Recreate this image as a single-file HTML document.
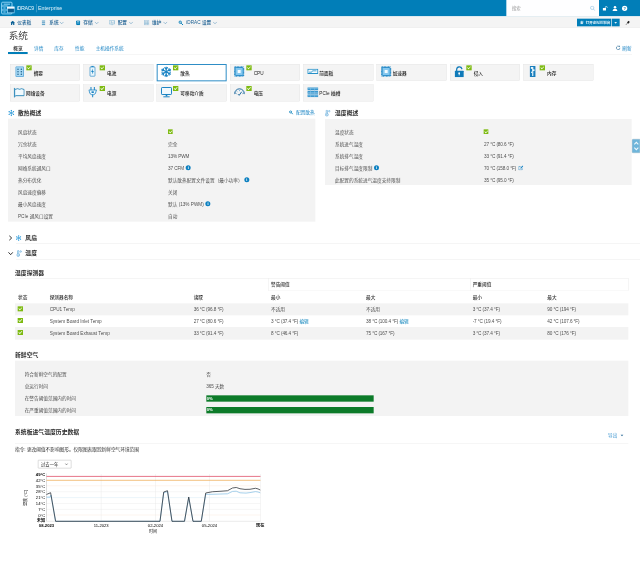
<!DOCTYPE html>
<html lang="zh-CN">
<head>
<meta charset="utf-8">
<title>iDRAC9 - 系统</title>
<style>
html,body{margin:0;padding:0;background:#fff;}
body{width:640px;height:568px;overflow:hidden;position:relative;}
#root{position:absolute;left:0;top:0;width:1920px;height:1704px;transform:scale(0.333333);transform-origin:0 0;
  font-family:"Liberation Sans","Noto Sans CJK SC",sans-serif;font-size:13px;color:#444;overflow:hidden;filter:grayscale(0);}
#root *{box-sizing:border-box;}
.abs{position:absolute;white-space:nowrap;}
a{color:#007db8;text-decoration:none;}
/* header */
#hdr{position:absolute;left:0;top:0;width:1920px;height:49px;background:rgba(0,125,184,.996);}
#nav{position:absolute;left:0;top:49px;width:1920px;height:34px;background:rgba(244,244,244,.996);border-bottom:1px solid #e2e2e2;}
.nv{position:absolute;top:3px;height:33px;line-height:33px;font-size:14px;font-weight:500;color:#1b5f92;white-space:nowrap;}
.t{position:absolute;white-space:nowrap;line-height:1;}
/* tiles */
.tile{position:absolute;width:210px;height:50px;background:rgba(244,244,244,.996);border:1px solid #dedede;}
.tile .lb{position:absolute;left:70px;top:19px;font-size:14px;line-height:14px;color:#222;font-weight:500;white-space:nowrap;}
.tile svg.ic{position:absolute;left:14px;top:7px;}
.ck{position:absolute;width:16px;height:15px;background:rgba(124,186,16,.996);}
.ck:after{content:"";position:absolute;left:3px;top:3px;width:8px;height:4px;border-left:2px solid #fff;border-bottom:2px solid #fff;transform:rotate(-45deg);}
.tile .ck{left:48px;top:3px;}
.tile.sel{background:rgba(255,255,255,.996);border:3px solid #2e8dc6;height:52px;}
.tile.sel > *{margin:-2px 0 0 -2px;}
.panel{position:absolute;background:rgba(243,243,243,.996);}
.row{position:absolute;font-size:14px;line-height:16px;color:#505050;white-space:nowrap;}
.h2{position:absolute;font-size:17.500px;font-weight:700;color:#2b2b2b;line-height:20px;white-space:nowrap;}
.info{display:inline-block;width:15px;height:15px;border-radius:50%;background:rgba(11,127,192,.996);color:#fff;font-size:11px;font-weight:bold;line-height:15px;text-align:center;vertical-align:middle;margin-left:5px;position:relative;top:-2px;letter-spacing:0;font-family:"Liberation Serif",serif;}
</style>
</head>
<body>
<div id="root">
<div id="hdr">
<svg class="abs" style="left:3px;top:4px" width="41" height="40" viewBox="0 0 41 40">
 <g fill="none" stroke="#93d8f8" stroke-width="3">
  <rect x="2" y="2.500" width="31" height="35.500" rx="3"/>
  <line x1="2" y1="14" x2="20" y2="14"/><line x1="2" y1="26" x2="20" y2="26"/>
  <line x1="8" y1="8.500" x2="27" y2="8.500"/><line x1="7" y1="20" x2="14" y2="20"/><line x1="7" y1="32" x2="14" y2="32"/>
 </g>
 <rect x="19" y="17" width="21" height="17.500" fill="#0a5d8f" stroke="#93d8f8" stroke-width="2.400"/>
 <rect x="18" y="16" width="23" height="6" fill="#eef9ff"/>
</svg>
<div class="t" style="left:50px;top:17px;font-size:16px;color:#e0f2fb;letter-spacing:-1px">iDRAC9</div>
<div class="abs" style="left:108px;top:12px;width:1px;height:25px;background:rgba(159,208,234,.996)"></div>
<div class="t" style="left:114px;top:17px;font-size:16px;color:#e0f2fb">Enterprise</div>
<div class="abs" style="left:1519px;top:0;width:278px;height:49px;background:rgba(255,255,255,.996)"></div>
<div class="t" style="left:1536px;top:18px;font-size:13px;color:#999">搜索</div>
<svg class="abs" style="left:1770px;top:17px" width="16" height="16" viewBox="0 0 16 16"><circle cx="6.5" cy="6.5" r="5" fill="none" stroke="#7fb9dd" stroke-width="1.6"/><line x1="10.2" y1="10.2" x2="15" y2="15" stroke="#7fb9dd" stroke-width="1.8"/></svg>
<svg class="abs" style="left:1808px;top:18px" width="16" height="14" viewBox="0 0 16 14"><rect x="0" y="6" width="10" height="8" fill="#fff"/><path d="M8 6V4a2.800 2.800 0 0 1 5.600 0V6" fill="none" stroke="#fff" stroke-width="1.800"/></svg>
<svg class="abs" style="left:1836px;top:16px" width="18" height="18" viewBox="0 0 18 18"><circle cx="9" cy="5.5" r="3.8" fill="#fff"/><path d="M2 17c0-5 3-7 7-7s7 2 7 7z" fill="#fff"/></svg>
<svg class="abs" style="left:1865px;top:16px" width="18" height="18" viewBox="0 0 18 18"><circle cx="9" cy="9" r="8" fill="#fff"/><text x="9" y="13.5" font-size="12" font-weight="bold" text-anchor="middle" fill="#007db8" font-family="Liberation Sans,sans-serif">?</text></svg>
</div>
<div id="nav">
<svg class="abs" style="left:31px;top:13px" width="14" height="13" viewBox="0 0 14 13"><path d="M7 0L0 6.5h2V13h3.6V8.5h2.8V13H12V6.5h2z" fill="#0e6296"/></svg>
<div class="nv" style="left:52px">仪表板</div>
<svg class="abs" style="left:125px;top:12px" width="11" height="15" viewBox="0 0 11 15"><g fill="#5b9fc6"><rect x="0" y="0" width="11" height="3.6"/><rect x="0" y="5.6" width="11" height="3.6"/><rect x="0" y="11.2" width="11" height="3.6"/></g></svg>
<div class="nv" style="left:148px">系统</div><svg class="abs" style="left:178px;top:15px" width="14" height="9" viewBox="0 0 15 9"><path d="M1.500 1.500L7.500 7.500L13.500 1.500" fill="none" stroke="#3f83b3" stroke-width="1.500"/></svg>
<svg class="abs" style="left:228px;top:12px" width="13" height="15" viewBox="0 0 13 15"><rect x="0.5" y="0.5" width="12" height="14" rx="2.5" fill="#007db8"/><rect x="3" y="3.2" width="7" height="1.8" fill="#cfe6f3"/><rect x="3" y="7" width="7" height="1.8" fill="#cfe6f3"/></svg>
<div class="nv" style="left:250px">存储</div><svg class="abs" style="left:283px;top:15px" width="14" height="9" viewBox="0 0 15 9"><path d="M1.500 1.500L7.500 7.500L13.500 1.500" fill="none" stroke="#3f83b3" stroke-width="1.500"/></svg>
<svg class="abs" style="left:328px;top:12px" width="17" height="15" viewBox="0 0 17 15"><g fill="none" stroke="#5b9fc6" stroke-width="1.5"><rect x="1" y="1" width="15" height="10"/><path d="M4 4h4M4 7h6M12 4v3"/><path d="M6 14h5"/></g></svg>
<div class="nv" style="left:353px">配置</div><svg class="abs" style="left:386px;top:15px" width="14" height="9" viewBox="0 0 15 9"><path d="M1.500 1.500L7.500 7.500L13.500 1.500" fill="none" stroke="#3f83b3" stroke-width="1.500"/></svg>
<svg class="abs" style="left:432px;top:12px" width="16" height="15" viewBox="0 0 16 15"><g fill="none" stroke="#7aaed0" stroke-width="1.4"><rect x="1" y="1" width="14" height="13"/><path d="M1 5.3h14M1 9.6h14M5.6 1v13M10.3 1v13"/></g></svg>
<div class="nv" style="left:456px">维护</div><svg class="abs" style="left:489px;top:15px" width="14" height="9" viewBox="0 0 15 9"><path d="M1.500 1.500L7.500 7.500L13.500 1.500" fill="none" stroke="#3f83b3" stroke-width="1.500"/></svg>
<svg class="abs" style="left:535px;top:12px" width="15" height="15" viewBox="0 0 15 15"><circle cx="5.5" cy="5.5" r="3.6" fill="none" stroke="#007db8" stroke-width="2.8"/><path d="M8.5 8.5L14 14" stroke="#007db8" stroke-width="3"/></svg>
<div class="nv" style="left:559px">iDRAC 设置</div><svg class="abs" style="left:638px;top:15px" width="14" height="9" viewBox="0 0 15 9"><path d="M1.500 1.500L7.500 7.500L13.500 1.500" fill="none" stroke="#3f83b3" stroke-width="1.500"/></svg>
<div class="abs" style="left:1731px;top:7px;width:102px;height:23px;background:rgba(0,125,184,.996)"></div>
<div class="abs" style="left:1835px;top:7px;width:24px;height:23px;background:rgba(0,125,184,.996)"></div>
<svg class="abs" style="left:1741px;top:13px" width="10" height="11" viewBox="0 0 12 13"><rect x="0" y="2" width="9" height="11" fill="#cde6f4"/><rect x="3" y="0" width="9" height="10" fill="none" stroke="#cde6f4" stroke-width="1.2"/></svg>
<div class="t" style="left:1757px;top:13px;font-size:10.500px;font-weight:bold;color:#e6f3fa">打开虚拟控制台</div>
<div class="abs" style="left:1843px;top:17px;width:0;height:0;border-left:4px solid transparent;border-right:4px solid transparent;border-top:5px solid #e6f3fa"></div>
<svg class="abs" style="left:1876px;top:12px" width="15" height="15" viewBox="0 0 15 15"><path d="M1 14L7 8" stroke="#222" stroke-width="1.600"/><path d="M4.500 5.500l5 5l1.200-2.400l2.800-2.800l-3.800-3.800l-2.800 2.800z" fill="#222"/></svg>
</div>
<div class="t" style="left:26px;top:93px;font-size:29px;color:#444">系统</div>
<div class="abs" style="left:24px;top:162px;width:1872px;height:1px;background:rgba(228,228,228,.996)"></div>
<div class="abs" style="left:24px;top:156px;width:59px;height:6px;background:rgba(0,125,184,.996)"></div>
<div class="t" style="left:40px;top:138px;font-size:14px;color:#222;font-weight:500">概览</div>
<div class="t" style="left:102px;top:138px;font-size:14px;color:#1a84c4">详情</div>
<div class="t" style="left:163px;top:138px;font-size:14px;color:#1a84c4">库存</div>
<div class="t" style="left:225px;top:138px;font-size:14px;color:#1a84c4">性能</div>
<div class="t" style="left:287px;top:138px;font-size:14px;color:#1a84c4">主机操作系统</div>
<svg class="abs" style="left:1847px;top:136px" width="15" height="15" viewBox="0 0 14 14"><path d="M12 7a5 5 0 1 1-1.600-3.700" fill="none" stroke="#2a6a96" stroke-width="1.700"/><path d="M7.800 3.800h4V-.2z" fill="#2a6a96"/></svg>
<div class="t" style="left:1867px;top:137px;font-size:14px;color:#1a84c4">刷新</div>

<div class="tile" style="left:30px;top:192px"><svg class="abs" style="left:15px;top:6px" width="26" height="32" viewBox="0 0 26 32"><rect x="1.200" y="1.200" width="23.600" height="29.600" rx="1.500" fill="#a9d9f4" stroke="#3d97d3" stroke-width="2.200"/><circle cx="8" cy="8.5" r="2.300" fill="#1d608c"/><circle cx="18" cy="8.5" r="2.300" fill="#1d608c"/><circle cx="8" cy="16" r="2.300" fill="#1d608c"/><circle cx="18" cy="16" r="2.300" fill="#1d608c"/><circle cx="8" cy="23.5" r="2.300" fill="#1d608c"/><circle cx="18" cy="23.5" r="2.300" fill="#1d608c"/></svg><div class="ck"></div><div class="lb" style="left:70px">摘要</div></div>
<div class="tile" style="left:250px;top:192px"><svg class="abs" style="left:17px;top:4px" width="19" height="33" viewBox="0 0 19 35"><rect x="6" y="0" width="7" height="4" fill="#1a84c4"/><rect x="1.2" y="4" width="16.600" height="29.800" rx="2.500" fill="#eaf5fb" stroke="#1a84c4" stroke-width="2.400"/><path d="M11 9L5 20h4l-1.500 8L14 17h-4z" fill="#1a84c4"/></svg><div class="ck"></div><div class="lb" style="left:70px">电池</div></div>
<div class="tile sel" style="left:470px;top:192px"><svg class="abs" style="left:11px;top:6px" width="33" height="33" viewBox="0 0 30 30"><g stroke="#1a84c4" stroke-width="3.2" stroke-linecap="round"><line x1="15" y1="15" x2="15.0" y2="28.2"/><line x1="15.0" y1="23.2" x2="18.6" y2="26.2"/><line x1="15.0" y1="23.2" x2="11.4" y2="26.2"/><line x1="15" y1="15" x2="3.6" y2="21.6"/><line x1="7.9" y1="19.1" x2="7.1" y2="23.8"/><line x1="7.9" y1="19.1" x2="3.4" y2="17.5"/><line x1="15" y1="15" x2="3.6" y2="8.4"/><line x1="7.9" y1="10.9" x2="3.4" y2="12.5"/><line x1="7.9" y1="10.9" x2="7.1" y2="6.2"/><line x1="15" y1="15" x2="15.0" y2="1.8"/><line x1="15.0" y1="6.8" x2="11.4" y2="3.8"/><line x1="15.0" y1="6.8" x2="18.6" y2="3.8"/><line x1="15" y1="15" x2="26.4" y2="8.4"/><line x1="22.1" y1="10.9" x2="22.9" y2="6.2"/><line x1="22.1" y1="10.9" x2="26.6" y2="12.5"/><line x1="15" y1="15" x2="26.4" y2="21.6"/><line x1="22.1" y1="19.1" x2="26.6" y2="17.5"/><line x1="22.1" y1="19.1" x2="22.9" y2="23.8"/></g></svg><div class="ck"></div><div class="lb" style="left:70px">散热</div></div>
<div class="tile" style="left:690px;top:192px"><svg class="abs" style="left:10px;top:5px" width="33" height="33" viewBox="0 0 33 33"><rect x="3.500" y="3.500" width="26" height="26" rx="2" fill="none" stroke="#1a84c4" stroke-width="5" stroke-dasharray="2.400 1.800"/><rect x="4.500" y="4.500" width="24" height="24" rx="3" fill="#86c8ef" stroke="#1a84c4" stroke-width="2.400"/><rect x="12" y="12" width="9" height="9" fill="#f4fbff"/></svg><div class="ck"></div><div class="lb" style="left:70px;top:20px">CPU</div></div>
<div class="tile" style="left:910px;top:192px"><svg class="abs" style="left:11px;top:13px" width="33" height="16" viewBox="0 0 33 16"><rect x="1.500" y="1.500" width="30" height="13" fill="#f6fbfe" stroke="#2590c8" stroke-width="3"/><path d="M5 10.500h8l2.500-4h12" fill="none" stroke="#2590c8" stroke-width="2.400"/></svg><div class="lb" style="left:47px">前面板</div></div>
<div class="tile" style="left:1130px;top:192px"><svg class="abs" style="left:11px;top:5px" width="33" height="33" viewBox="0 0 33 33"><rect x="3.500" y="3.500" width="26" height="26" rx="2" fill="none" stroke="#1a84c4" stroke-width="5" stroke-dasharray="2.400 1.800"/><rect x="4.500" y="4.500" width="24" height="24" rx="3" fill="#86c8ef" stroke="#1a84c4" stroke-width="2.400"/><rect x="12" y="12" width="9" height="9" fill="#f4fbff"/></svg><div class="lb" style="left:47px">加速器</div></div>
<div class="tile" style="left:1350px;top:192px"><svg class="abs" style="left:13px;top:5px" width="29" height="34" viewBox="0 0 29 34"><path d="M6 15V10.500a8 8 0 0 1 15.700-2.200" fill="none" stroke="#0f7ab9" stroke-width="3.600" stroke-linecap="round"/><rect x="0" y="14" width="27" height="19.500" rx="1.500" fill="#0f7ab9"/><circle cx="13.500" cy="21.500" r="2.600" fill="#fff"/><rect x="12.200" y="21.500" width="2.600" height="6.500" fill="#fff"/></svg><div class="ck"></div><div class="lb" style="left:70px">侵入</div></div>
<div class="tile" style="left:1570px;top:192px"><svg class="abs" style="left:18px;top:5px" width="18" height="33" viewBox="0 0 18 33"><rect x="0" y="0" width="18" height="33" rx="1" fill="#1a7fbd"/><rect x="7.500" y="3" width="3.400" height="27" fill="#eef8fd"/><rect x="3.500" y="3" width="6" height="5.500" fill="#eef8fd"/><rect x="9" y="10" width="5.500" height="5" fill="#eef8fd"/><rect x="4" y="17" width="5" height="4" fill="#cfe9f7"/></svg><div class="ck"></div><div class="lb" style="left:70px">内存</div></div>
<div class="tile" style="left:30px;top:254px"><svg class="abs" style="left:10px;top:8px" width="33" height="30" viewBox="0 0 33 30"><path d="M2 0.500v29" stroke="#2a86b8" stroke-width="3.200" fill="none"/><path d="M3 5.500c4 0 5.500-2.500 9-2.500c3 0 3 2 6 2s3-2 6-2c2.500 0 4 2.500 7.500 2.500V24H6.500l-3.500 3z" fill="#f2fafe" stroke="#2a86b8" stroke-width="2.800" stroke-linejoin="round"/></svg><div class="lb" style="left:47px">网络设备</div></div>
<div class="tile" style="left:250px;top:254px"><svg class="abs" style="left:14px;top:6px" width="26" height="32" viewBox="0 0 26 32"><path d="M8 1v8M18 1v8" stroke="#1a84c4" stroke-width="3" stroke-linecap="round"/><path d="M1.500 9h23l-3.500 11l-5 3h-6l-5-3z" fill="#eef7fc" stroke="#1a84c4" stroke-width="2.400" stroke-linejoin="round"/><rect x="9.500" y="13" width="7" height="5" fill="#1a84c4"/><path d="M13 23v8" stroke="#1a84c4" stroke-width="3"/></svg><div class="ck"></div><div class="lb" style="left:70px">电源</div></div>
<div class="tile" style="left:470px;top:254px"><svg class="abs" style="left:12px;top:6px" width="33" height="32" viewBox="0 0 33 32"><rect x="1.500" y="1.500" width="30" height="21" rx="2" fill="#f2f9fd" stroke="#1a84c4" stroke-width="3"/><rect x="14" y="23" width="5" height="5" fill="#1a84c4"/><rect x="7" y="28" width="19" height="3.200" fill="#1a84c4"/></svg><div class="ck"></div><div class="lb" style="left:70px">可移动介质</div></div>
<div class="tile" style="left:690px;top:254px"><svg class="abs" style="left:11px;top:7px" width="33" height="27" viewBox="0 0 33 27"><path d="M2 19A14.500 14.500 0 0 1 31 19" fill="none" stroke="#1f6aa0" stroke-width="3"/><path d="M2 19c1.500-1.800 4-1.800 5.500 0M25.500 19c1.500-1.800 4-1.800 5.500 0" fill="none" stroke="#1f6aa0" stroke-width="2.400"/><path d="M8.500 12l2 2.500M16.500 8v3.500M24.500 12l-2 2.500" stroke="#3d97d3" stroke-width="2"/><path d="M12 20.500l3.500 3.500L22.500 14" fill="none" stroke="#1f6aa0" stroke-width="3"/></svg><div class="ck"></div><div class="lb" style="left:70px">电压</div></div>
<div class="tile" style="left:910px;top:254px"><svg class="abs" style="left:11px;top:7px" width="33" height="30" viewBox="0 0 32 29" preserveAspectRatio="none"><rect x="0" y="0" width="32" height="8.300" fill="#3a97cf"/><rect x="0" y="3.2" width="32" height="1.600" fill="#8cc6e8"/><rect x="0" y="10.3" width="32" height="8.300" fill="#3a97cf"/><rect x="0" y="13.5" width="32" height="1.600" fill="#8cc6e8"/><rect x="0" y="20.6" width="32" height="8.300" fill="#3a97cf"/><rect x="0" y="23.8" width="32" height="1.600" fill="#8cc6e8"/><rect x="9" y="0" width="1.500" height="29" fill="#8cc6e8"/><rect x="21" y="0" width="1.500" height="29" fill="#8cc6e8"/></svg><div class="lb" style="left:47px">PCIe 插槽</div></div>

<svg class="abs" style="left:24px;top:329px" width="20" height="20" viewBox="0 0 20 20"><g stroke="#2396d8" stroke-width="2"><line x1="10.0" y1="2.4" x2="10.0" y2="17.6"/><line x1="16.6" y1="6.2" x2="3.4" y2="13.8"/><line x1="16.6" y1="13.8" x2="3.4" y2="6.2"/></g><g fill="#2396d8"><circle cx="10.0" cy="17.6" r="1.900"/><circle cx="3.4" cy="13.8" r="1.900"/><circle cx="3.4" cy="6.2" r="1.900"/><circle cx="10.0" cy="2.4" r="1.900"/><circle cx="16.6" cy="6.2" r="1.900"/><circle cx="16.6" cy="13.8" r="1.900"/></g></svg><div class="h2" style="left:54px;top:330px">散热概述</div><svg class="abs" style="left:867px;top:331px" width="13" height="13" viewBox="0 0 15 15"><circle cx="5.500" cy="5.500" r="3.600" fill="none" stroke="#007db8" stroke-width="2.800"/><path d="M8.500 8.500L14 14" stroke="#007db8" stroke-width="3"/></svg><div class="t" style="left:888px;top:331px;font-size:14px;color:#1a84c4">配置散热</div><svg class="abs" style="left:975px;top:329px" width="17" height="21" viewBox="0 0 17 21"><circle cx="5.500" cy="15" r="4.300" fill="none" stroke="#2f8fcf" stroke-width="1.600"/><path d="M3.700 11.500V3a1.800 1.800 0 0 1 3.600 0v8.500" fill="#fff" stroke="#2f8fcf" stroke-width="1.500"/><circle cx="5.500" cy="15" r="1.600" fill="#2f8fcf"/><circle cx="13" cy="4.500" r="2.300" fill="none" stroke="#2f8fcf" stroke-width="1.400"/></svg><div class="h2" style="left:1005px;top:330px">温度概述</div><div class="panel" style="left:24px;top:356px;width:922px;height:309px"></div><div class="panel" style="left:975px;top:357px;width:920px;height:198px"></div><div class="row" style="left:54px;top:387.5px">风扇状态</div><div class="ck" style="left:504px;top:388px;width:14px;height:14px"></div><div class="row" style="left:54px;top:423.6px">冗余状态</div><div class="row" style="left:504px;top:423.6px">完全</div><div class="row" style="left:54px;top:459.7px">平均风扇速度</div><div class="row" style="left:504px;top:459.7px;letter-spacing:-0.3px;">13% PWM</div><div class="row" style="left:54px;top:495.8px">网络系统通风口</div><div class="row" style="left:504px;top:495.8px;letter-spacing:-0.3px;">37 CFM<span class="info">i</span></div><div class="row" style="left:54px;top:531.9px">热分布优化</div><div class="row" style="left:504px;top:531.9px">默认散热配置文件设置（最小功率）<span class="info">i</span></div><div class="row" style="left:54px;top:568.0px">风扇速度偏移</div><div class="row" style="left:504px;top:568.0px">关闭</div><div class="row" style="left:54px;top:604.1px">最小风扇速度</div><div class="row" style="left:504px;top:604.1px">默认 (13% PWM)<span class="info">i</span></div><div class="row" style="left:54px;top:640.2px">PCIe 通风口设置</div><div class="row" style="left:504px;top:640.2px">自动</div><div class="row" style="left:1005px;top:387.5px">温度状态</div><div class="ck" style="left:1451px;top:388px;width:14px;height:14px"></div><div class="row" style="left:1005px;top:423.6px">系统进气温度</div><div class="row" style="left:1452px;top:423.6px;letter-spacing:-0.3px;">27 °C (80.6 °F)</div><div class="row" style="left:1005px;top:459.7px">系统排气温度</div><div class="row" style="left:1452px;top:459.7px;letter-spacing:-0.3px;">33 °C (91.4 °F)</div><div class="row" style="left:1005px;top:495.8px">目标排气温度限制<span class="info">i</span></div><div class="row" style="left:1452px;top:495.8px;letter-spacing:-0.3px;">70 °C (158.0 °F)<svg style="vertical-align:middle;margin-left:6px;position:relative;top:-2px" width="15" height="15" viewBox="0 0 13 13"><path d="M10 7.500V12H1V3h5" fill="none" stroke="#1a84c4" stroke-width="1.400"/><path d="M5 8.500L5.500 6l5.500-5.500l2 2L7.500 8z" fill="#1a84c4"/></svg></div><div class="row" style="left:1005px;top:531.9px">此配置的系统进气温度支持限制</div><div class="row" style="left:1452px;top:531.9px;letter-spacing:-0.3px;">35 °C (95.0 °F)</div><div class="abs" style="left:1896px;top:417px;width:24px;height:42px;background:rgba(109,181,218,.996);border:1px solid #8fa9b8;border-radius:3px 0 0 3px"></div><svg class="abs" style="left:1901px;top:423px" width="16" height="30" viewBox="0 0 16 30"><path d="M2 10L8 4l6 6M2 20l6 6l6-6" fill="none" stroke="#eef8fd" stroke-width="3.200"/></svg>
<svg class="abs" style="left:26px;top:705px" width="12" height="18" viewBox="0 0 12 18"><path d="M2 2.500l7 6.500l-7 6.500" fill="none" stroke="#222" stroke-width="2.800"/></svg><svg class="abs" style="left:47px;top:705px" width="18" height="18" viewBox="0 0 20 20"><g stroke="#2396d8" stroke-width="2"><line x1="10.0" y1="2.4" x2="10.0" y2="17.6"/><line x1="16.6" y1="6.2" x2="3.4" y2="13.8"/><line x1="16.6" y1="13.8" x2="3.4" y2="6.2"/></g><g fill="#2396d8"><circle cx="10.0" cy="17.6" r="1.900"/><circle cx="3.4" cy="13.8" r="1.900"/><circle cx="3.4" cy="6.2" r="1.900"/><circle cx="10.0" cy="2.4" r="1.900"/><circle cx="16.6" cy="6.2" r="1.900"/><circle cx="16.6" cy="13.8" r="1.900"/></g></svg><div class="h2" style="left:76px;top:704px">风扇</div><div class="abs" style="left:48px;top:730px;width:1872px;height:1px;background:rgba(227,227,227,.996)"></div><svg class="abs" style="left:23px;top:755px" width="18" height="12" viewBox="0 0 18 12"><path d="M2.500 2l6.500 7l6.500-7" fill="none" stroke="#222" stroke-width="2.800"/></svg><svg class="abs" style="left:49px;top:750px" width="17" height="21" viewBox="0 0 17 21"><circle cx="5.500" cy="15" r="4.300" fill="none" stroke="#2f8fcf" stroke-width="1.600"/><path d="M3.700 11.500V3a1.800 1.800 0 0 1 3.600 0v8.500" fill="#fff" stroke="#2f8fcf" stroke-width="1.500"/><circle cx="5.500" cy="15" r="1.600" fill="#2f8fcf"/><circle cx="13" cy="4.500" r="2.300" fill="none" stroke="#2f8fcf" stroke-width="1.400"/></svg><div class="h2" style="left:76px;top:750px">温度</div><div class="abs" style="left:48px;top:778px;width:1872px;height:1px;background:rgba(227,227,227,.996)"></div>
<div class="h2" style="left:45px;top:808px;font-size:17.500px">温度探测器</div><div class="abs" style="left:45px;top:835px;width:1840px;height:1px;background:rgba(227,227,227,.996)"></div><div class="abs" style="left:804px;top:835px;width:606px;height:37px;border-left:1px solid #e0e0e0;border-bottom:1px solid #ececec"></div><div class="abs" style="left:1410px;top:835px;width:475px;height:37px;border-left:1px solid #e0e0e0;border-right:1px solid #e0e0e0;border-bottom:1px solid #ececec"></div><div class="abs" style="left:45px;top:910px;width:1840px;height:36px;background:rgba(243,243,243,.996)"></div><div class="abs" style="left:45px;top:981px;width:1840px;height:36px;background:rgba(243,243,243,.996)"></div><div class="abs" style="left:45px;top:1017px;width:1840px;height:1px;background:rgba(232,232,232,.996)"></div><div class="row" style="left:813px;top:845px;color:#333;font-weight:500;font-size:14px">警告阈值</div><div class="row" style="left:1418px;top:845px;color:#333;font-weight:500;font-size:14px">严重阈值</div><div class="row" style="left:54px;top:883px;color:#333;font-weight:500;font-size:14px">状态</div><div class="row" style="left:149px;top:883px;color:#333;font-weight:500;font-size:14px">探测器名称</div><div class="row" style="left:581px;top:883px;color:#333;font-weight:500;font-size:14px">读取</div><div class="row" style="left:813px;top:883px;color:#333;font-weight:500;font-size:14px">最小</div><div class="row" style="left:1098px;top:883px;color:#333;font-weight:500;font-size:14px">最大</div><div class="row" style="left:1418px;top:883px;color:#333;font-weight:500;font-size:14px">最小</div><div class="row" style="left:1642px;top:883px;color:#333;font-weight:500;font-size:14px">最大</div><div class="ck" style="left:53px;top:919px;width:16px;height:15px"></div><div class="row" style="left:149px;top:920px;">CPU1 Temp</div><div class="row" style="left:581px;top:920px;letter-spacing:-0.3px;">36 °C (96.8 °F)</div><div class="row" style="left:813px;top:920px;">不适用</div><div class="row" style="left:1098px;top:920px;">不适用</div><div class="row" style="left:1418px;top:920px;letter-spacing:-0.3px;">3 °C (37.4 °F)</div><div class="row" style="left:1642px;top:920px;letter-spacing:-0.3px;">90 °C (194 °F)</div><div class="ck" style="left:53px;top:954px;width:16px;height:15px"></div><div class="row" style="left:149px;top:955px;">System Board Inlet Temp</div><div class="row" style="left:581px;top:955px;letter-spacing:-0.3px;">27 °C (80.6 °F)</div><div class="row" style="left:813px;top:955px;letter-spacing:-0.3px;">3 °C (37.4 °F) <a>编辑</a></div><div class="row" style="left:1098px;top:955px;letter-spacing:-0.3px;">38 °C (100.4 °F) <a>编辑</a></div><div class="row" style="left:1418px;top:955px;letter-spacing:-0.3px;">-7 °C (19.4 °F)</div><div class="row" style="left:1642px;top:955px;letter-spacing:-0.3px;">42 °C (107.6 °F)</div><div class="ck" style="left:53px;top:990px;width:16px;height:15px"></div><div class="row" style="left:149px;top:991px;">System Board Exhaust Temp</div><div class="row" style="left:581px;top:991px;letter-spacing:-0.3px;">33 °C (91.4 °F)</div><div class="row" style="left:813px;top:991px;letter-spacing:-0.3px;">8 °C (46.4 °F)</div><div class="row" style="left:1098px;top:991px;letter-spacing:-0.3px;">75 °C (167 °F)</div><div class="row" style="left:1418px;top:991px;letter-spacing:-0.3px;">3 °C (37.4 °F)</div><div class="row" style="left:1642px;top:991px;letter-spacing:-0.3px;">80 °C (176 °F)</div>
<div class="h2" style="left:45px;top:1054px;font-size:17.500px">新鲜空气</div><div class="panel" style="left:45px;top:1082px;width:1840px;height:166px"></div><div class="row" style="left:74px;top:1115px">符合新鲜空气的配置</div><div class="row" style="left:619px;top:1115px">否</div><div class="row" style="left:74px;top:1150px">总运行时间</div><div class="row" style="left:619px;top:1150px;letter-spacing:-0.3px;">365 天数</div><div class="row" style="left:74px;top:1186px">在警告阈值范围内的时间</div><div class="row" style="left:74px;top:1223px">在严重阈值范围内的时间</div><div class="abs" style="left:619px;top:1186px;width:502px;height:19px;background:rgba(11,122,40,.996);color:#fff;font-size:12.500px;font-weight:bold;line-height:19px;padding-left:1px">0%</div><div class="abs" style="left:619px;top:1221px;width:502px;height:19px;background:rgba(11,122,40,.996);color:#fff;font-size:12.500px;font-weight:bold;line-height:19px;padding-left:1px">0%</div>
<div class="h2" style="left:45px;top:1287px;font-size:17.500px">系统板进气温度历史数据</div><div class="t" style="left:1824px;top:1299px;font-size:14px;color:#3a94cf">导出</div><div class="abs" style="left:1862px;top:1304px;width:0;height:0;border-left:4px solid transparent;border-right:4px solid transparent;border-top:5px solid #2a6a96"></div><div class="abs" style="left:45px;top:1331px;width:1840px;height:1px;background:rgba(227,227,227,.996)"></div><div class="row" style="left:45px;top:1340px;color:#333;font-size:14px">指令: 更改阈值不影响图形。仅限图表跟踪新鲜空气环境范围</div><div class="abs" style="left:114px;top:1380px;width:100px;height:25px;border:1px solid #999;border-radius:2px;background:rgba(255,255,255,.996);font-size:13px;line-height:23px;padding-left:8px;color:#222">过去一年</div><svg class="abs" style="left:194px;top:1389px" width="11" height="8" viewBox="0 0 11 8"><path d="M1.500 1.500l4 4l4-4" fill="none" stroke="#333" stroke-width="1.600"/></svg><svg class="abs" style="left:60px;top:1410px" width="760" height="200" viewBox="0 0 760 200" font-family="Liberation Sans, Noto Sans CJK SC, sans-serif"><line x1="79.5" y1="47.4" x2="721.5" y2="47.4" stroke="#fbe9dc" stroke-width="1.500"/><line x1="79.5" y1="65.1" x2="721.5" y2="65.1" stroke="#ececec" stroke-width="1.500"/><line x1="79.5" y1="82.8" x2="721.5" y2="82.8" stroke="#d8ebf7" stroke-width="1.500"/><line x1="79.5" y1="100.5" x2="721.5" y2="100.5" stroke="#ececec" stroke-width="1.500"/><line x1="79.5" y1="118.2" x2="721.5" y2="118.2" stroke="#ececec" stroke-width="1.500"/><line x1="79.5" y1="135.0" x2="721.5" y2="135.0" stroke="#fbe9dc" stroke-width="1.500"/><line x1="243.6" y1="12" x2="243.6" y2="153.9" stroke="#e6e6e6" stroke-width="1.200"/><line x1="406.5" y1="12" x2="406.5" y2="153.9" stroke="#e6e6e6" stroke-width="1.200"/><line x1="568.5" y1="12" x2="568.5" y2="153.9" stroke="#e6e6e6" stroke-width="1.200"/><line x1="721.5" y1="12" x2="721.5" y2="153.9" stroke="#e6e6e6" stroke-width="1.200"/><line x1="79.5" y1="10.5" x2="79.5" y2="153.9" stroke="#bbb" stroke-width="1.500"/><line x1="79.5" y1="153.9" x2="721.5" y2="153.9" stroke="#ccc" stroke-width="1.200"/><line x1="79.5" y1="19.2" x2="721.5" y2="19.2" stroke="#e0526a" stroke-width="2.400"/><line x1="79.5" y1="30.9" x2="721.5" y2="30.9" stroke="#f0b060" stroke-width="2.400"/><polyline points="79.5,81.3 90.6,81.3 93.0,75.0 106.8,153.9 420.0,153.9 431.2,68.4 442.5,64.8 456.0,153.9 493.5,153.9 506.2,82.8 519.0,153.9 543.8,153.9 557.2,72.9 576.0,72.9 622.5,71.4 637.5,64.2 648.8,63.6 660.0,68.4 678.0,69.3 690.0,67.8 706.5,64.8 714.0,66.0 720.9,68.4" fill="none" stroke="#78b9e3" stroke-width="2" stroke-linejoin="round"/><polyline points="79.5,73.5 91.8,68.1 106.8,153.9 420.0,153.9 431.2,66.0 442.5,62.2 456.0,153.9 493.5,153.9 506.2,81.0 519.0,153.9 543.8,153.9 557.2,69.0 577.5,65.2 600.0,63.9 622.5,62.2 637.5,54.0 648.8,52.5 660.0,56.2 675.0,58.2 690.0,57.8 706.5,54.8 714.0,56.7 720.9,60.0" fill="none" stroke="#2a2f36" stroke-width="2.300" stroke-linejoin="round"/><text x="75.5" y="18.6" font-size="12.500" text-anchor="end" fill="#000" font-weight="bold">49°C</text><text x="75.5" y="35.4" font-size="12.500" text-anchor="end" fill="#000">42°C</text><text x="75.5" y="52.8" font-size="12.500" text-anchor="end" fill="#000">35°C</text><text x="75.5" y="70.2" font-size="12.500" text-anchor="end" fill="#000">28°C</text><text x="75.5" y="87.9" font-size="12.500" text-anchor="end" fill="#000">21°C</text><text x="75.5" y="105.3" font-size="12.500" text-anchor="end" fill="#000">14°C</text><text x="75.5" y="123.0" font-size="12.500" text-anchor="end" fill="#000">7°C</text><text x="75.5" y="140.4" font-size="12.500" text-anchor="end" fill="#000">0°C</text><text x="75.5" y="156.3" font-size="12.500" text-anchor="end" fill="#000" font-weight="bold">未知</text><text x="79.5" y="170.1" font-size="12.500" text-anchor="middle" fill="#000" font-weight="bold">08-2023</text><text x="243.6" y="170.1" font-size="12.500" text-anchor="middle" fill="#000">11-2023</text><text x="406.5" y="170.1" font-size="12.500" text-anchor="middle" fill="#000">02-2024</text><text x="568.5" y="170.1" font-size="12.500" text-anchor="middle" fill="#000">05-2024</text><text x="720.9" y="170.1" font-size="12.500" text-anchor="middle" fill="#000" font-weight="bold">现在</text><text x="399.0" y="188.4" font-size="12" text-anchor="middle" fill="#000">时间</text><text transform="translate(21.0,83.4) rotate(-90)" font-size="12" text-anchor="middle" fill="#000">温度 (°C)</text></svg>
</div>
</body>
</html>
